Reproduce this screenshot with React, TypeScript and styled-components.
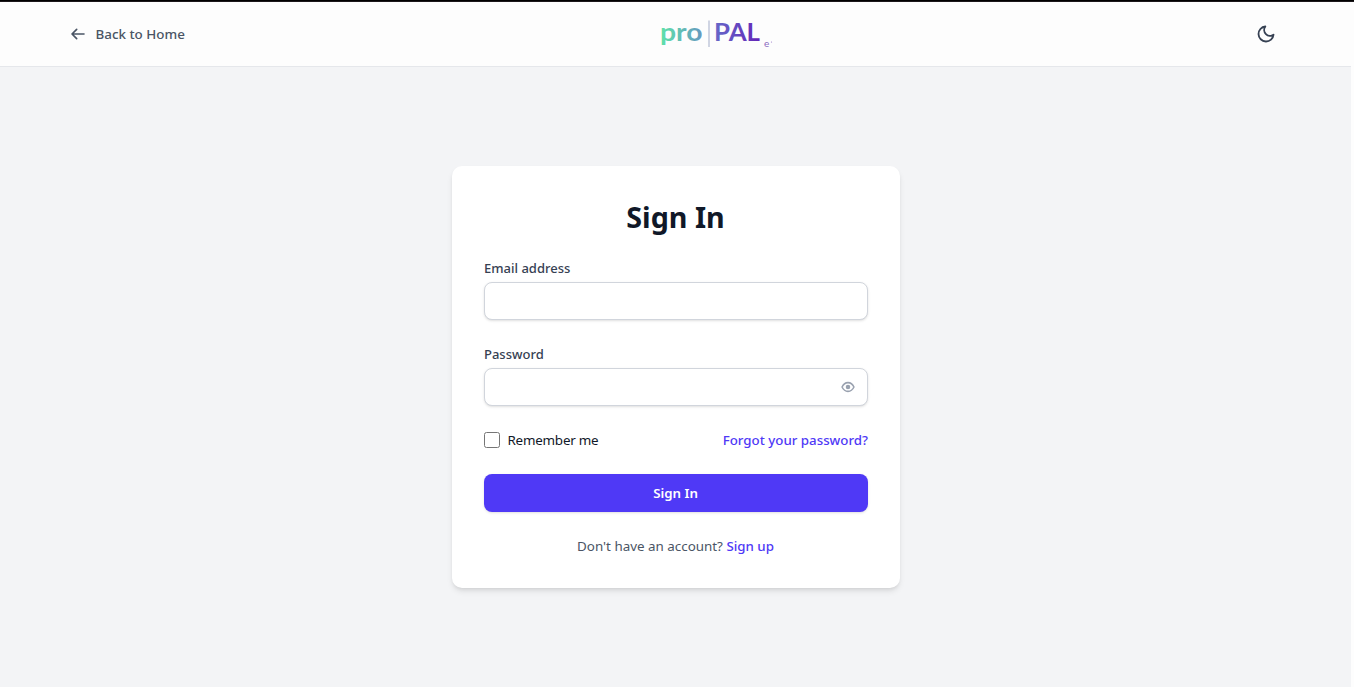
import React from "react";
import styled, { createGlobalStyle } from "styled-components";

const Global = createGlobalStyle`
  *, *::before, *::after { box-sizing: border-box; }
  body { margin: 0; background: #fdfdfd; font-family: "Noto Sans", "Open Sans", sans-serif; }
  button, input { font-family: inherit; }
`;

const Page = styled.div`
  width: 1351px;
  height: 687px;
  display: flex;
  flex-direction: column;
  background: #f3f4f6;
`;

const Strip = styled.div`
  width: 1354px;
  height: 2px;
  flex: none;
  background: linear-gradient(#000 50%, #1c181b 50%);
`;

const Header = styled.header`
  height: 65px;
  flex: none;
  display: grid;
  grid-template-columns: 587px 116px 1fr;
  align-items: center;
  padding: 0 75px 0 70px;
  background: #fdfdfd;
  border-bottom: 1px solid #e5e7eb;
`;

const BackLink = styled.a`
  display: flex;
  align-items: center;
  gap: 9.5px;
  color: #4a5565;
  font-size: 13.4px;
  font-weight: 500;
  line-height: 20px;
`;

const HeaderEnd = styled.div`
  display: flex;
  justify-content: flex-end;
`;

const ThemeButton = styled.button`
  display: flex;
  padding: 0;
  border: 0;
  background: none;
  color: #364153;
`;

const Main = styled.main`
  flex: 1;
  display: flex;
  align-items: flex-start;
  justify-content: center;
  padding-top: 99px;
  padding-left: 1px;
`;

const Card = styled.form`
  width: 448px;
  height: 422px;
  padding: 33px 32px 32px;
  display: flex;
  flex-direction: column;
  background: #fff;
  border-radius: 10px;
  box-shadow: 0 4px 6px -1px rgba(0, 0, 0, 0.1), 0 2px 4px -2px rgba(0, 0, 0, 0.1);
`;

const Title = styled.h1`
  margin: 0 1px 23px 0;
  text-align: center;
  font-size: 28.7px;
  font-weight: 700;
  line-height: 36px;
  color: #101828;
`;

const Field = styled.div`
  display: flex;
  flex-direction: column;
  gap: 4px;
  margin-bottom: 24px;
  line-height: 20px;
`;

const Label = styled.label`
  height: 20px;
  font-size: 13px;
  font-weight: 500;
  line-height: 20px;
  color: #364153;
`;

const InputBox = styled.div`
  height: 38px;
  display: flex;
  align-items: center;
  padding: 0 12px;
  border: 1px solid #d1d5dc;
  border-radius: 8px;
  background: #fff;
  box-shadow: 0 1px 3px rgba(0, 0, 0, 0.1), 0 1px 2px -1px rgba(0, 0, 0, 0.1);
`;

const Input = styled.input`
  flex: 1;
  min-width: 0;
  padding: 0;
  border: 0;
  outline: 0;
  background: transparent;
  font-size: 14px;
`;

const Row = styled.div`
  display: flex;
  align-items: center;
  justify-content: space-between;
  height: 20px;
  margin-bottom: 24px;
`;

const Remember = styled.label`
  display: flex;
  align-items: center;
  gap: 7.5px;
  font-size: 13.4px;
  letter-spacing: -0.22px;
  color: #101828;
`;

const Check = styled.input`
  width: 16px;
  height: 16px;
  margin: 0;
`;

const Link = styled.a`
  font-size: 13.3px;
  font-weight: 500;
  color: #4f39f6;
`;

const Submit = styled.button`
  height: 38px;
  flex: none;
  border: 0;
  border-radius: 8px;
  padding: 0 7px 0 6px;
  background: #4f39f6;
  color: #fff;
  font-size: 13.3px;
  font-weight: 600;
  box-shadow: 0 1px 3px rgba(0, 0, 0, 0.1), 0 1px 2px -1px rgba(0, 0, 0, 0.1);
`;

const Footer = styled.p`
  margin: 24px 1px 0 0;
  text-align: center;
  font-size: 13.4px;
  line-height: 20px;
  color: #4a5565;
`;

const LogoText = styled.text`
  font-family: Lato, "Open Sans", sans-serif;
`;

const Logo = () => (
  <svg width="116" height="40" viewBox="0 0 116 40">
    <defs>
      <linearGradient id="pro" gradientUnits="userSpaceOnUse" x1="4" y1="0" x2="46" y2="0">
        <stop stopColor="#5fe0aa" />
        <stop offset="1" stopColor="#6597c0" />
      </linearGradient>
      <linearGradient id="pal" gradientUnits="userSpaceOnUse" x1="58" y1="0" x2="102" y2="0">
        <stop stopColor="#6668c8" />
        <stop offset="1" stopColor="#6427b8" />
      </linearGradient>
    </defs>
    <LogoText x="3" y="27" fontSize="25.5" fontWeight="700" textLength="42.500" lengthAdjust="spacingAndGlyphs" fill="url(#pro)">pro</LogoText>
    <path d="M52 6.500V33" stroke="#bcc3d7" strokeWidth="1.4" />
    <LogoText x="57" y="27" fontSize="25" fontWeight="700" textLength="46" lengthAdjust="spacingAndGlyphs" fill="url(#pal)">PAL</LogoText>
    <LogoText x="107" y="33" fontSize="10" fill="#8a69bf">e</LogoText>
    <circle cx="114.5" cy="28" r="0.6" fill="#9b7bc9" />
  </svg>
);

export default function App() {
  return (
    <>
      <Global />
      <Page>
        <Strip />
        <Header>
          <BackLink>
            <svg width="16" height="16" viewBox="0 0 24 24" fill="none" stroke="currentColor" strokeWidth="2.5" strokeLinecap="round" strokeLinejoin="round">
              <path d="M10 19l-7-7m0 0l7-7m-7 7h18" />
            </svg>
            Back to Home
          </BackLink>
          <Logo />
          <HeaderEnd>
            <ThemeButton type="button" aria-label="Toggle theme">
              <svg width="20" height="20" viewBox="0 0 24 24" fill="none" stroke="currentColor" strokeWidth="2.2" strokeLinecap="round" strokeLinejoin="round">
                <path d="M21 12.790A9 9 0 1 1 11.210 3 7 7 0 0 0 21 12.790z" />
              </svg>
            </ThemeButton>
          </HeaderEnd>
        </Header>
        <Main>
          <Card>
            <Title>Sign In</Title>
            <Field>
              <Label htmlFor="email">Email address</Label>
              <InputBox><Input id="email" type="email" /></InputBox>
            </Field>
            <Field>
              <Label htmlFor="password">Password</Label>
              <InputBox>
                <Input id="password" type="password" />
                <svg width="14" height="14" viewBox="0 0 24 24" fill="none" stroke="#99a1af" strokeWidth="2.6">
                  <path d="M1.800 12s3.500-7.500 10.200-7.500S22.200 12 22.200 12s-3.500 7.500-10.200 7.500S1.800 12 1.800 12Z" />
                  <circle cx="12" cy="12" r="2.600" fill="#99a1af" />
                </svg>
              </InputBox>
            </Field>
            <Row>
              <Remember><Check type="checkbox" />Remember me</Remember>
              <Link>Forgot your password?</Link>
            </Row>
            <Submit type="button">Sign In</Submit>
            <Footer>Don't have an account? <Link>Sign up</Link></Footer>
          </Card>
        </Main>
      </Page>
    </>
  );
}
